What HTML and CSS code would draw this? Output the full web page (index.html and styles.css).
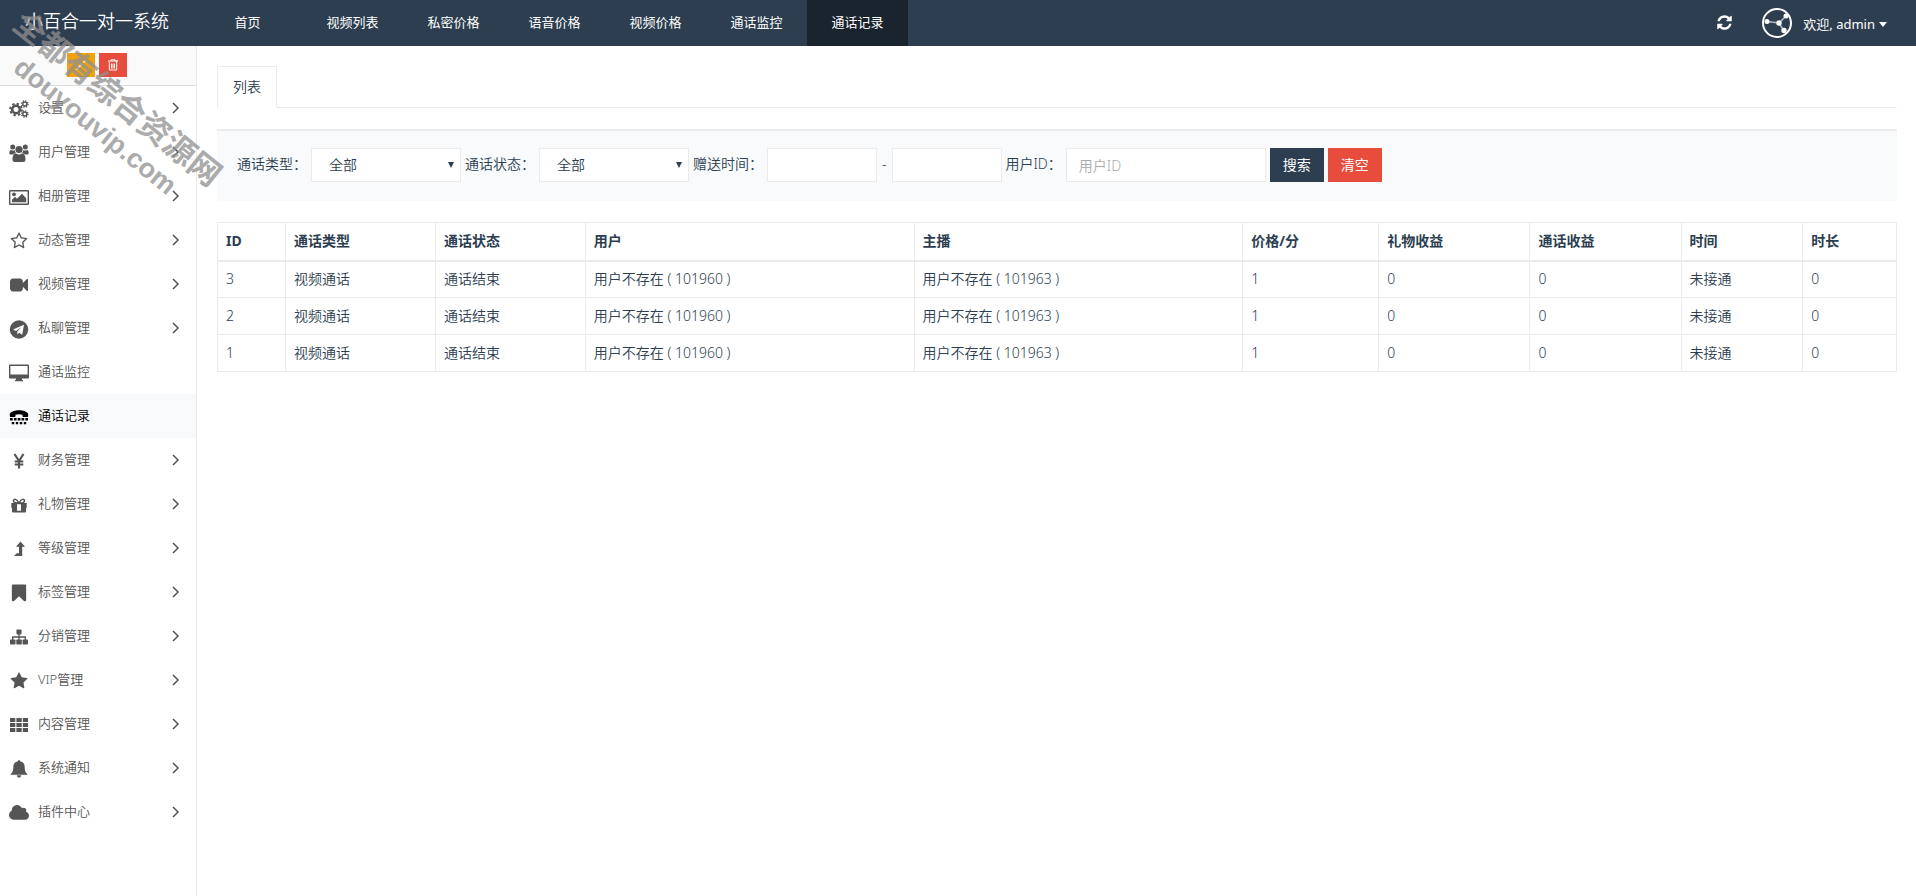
FILE: index.html
```html
<!DOCTYPE html>
<html lang="zh-CN">
<head>
<meta charset="utf-8">
<title>小百合一对一系统</title>
<link rel="stylesheet" href="styles.css">
</head>
<body>
<svg class="sprite" aria-hidden="true">
  <symbol id="chevron" viewBox="0 0 8 12"><path d="M1 1l5 5-5 5" fill="none" stroke="currentColor" stroke-width="1.5"/></symbol>
  <symbol id="caret" viewBox="0 0 8 6"><path d="M0 0h8L4 5z"/></symbol>
</svg>
<header class="topbar">
  <a class="brand" href="#">小百合一对一系统</a>
  <nav class="topnav">
    <a class="home" href="#">首页</a>
    <a href="#">视频列表</a>
    <a href="#">私密价格</a>
    <a href="#">语音价格</a>
    <a href="#">视频价格</a>
    <a href="#">通话监控</a>
    <a class="active" href="#">通话记录</a>
  </nav>
  <div class="userbar">
    <button class="refresh" type="button" aria-label="刷新"><svg viewBox="0 0 1792 1792" width="17" height="17"><path d="M1639 1056q0 5-1 7-64 268-268 434.500t-478 166.500q-146 0-282.500-55t-243.500-157l-129 129q-19 19-45 19t-45-19-19-45v-448q0-26 19-45t45-19h448q26 0 45 19t19 45-19 45l-137 137q71 66 161 102t187 36q134 0 250-65t186-179q11-17 53-117 8-23 30-23h192q13 0 22.500 9.500t9.500 22.500zm25-800v448q0 26-19 45t-45 19h-448q-26 0-45-19t-19-45 19-45l138-138q-148-137-349-137-134 0-250 65t-186 179q-11 17-53 117-8 23-30 23h-199q-13 0-22.500-9.500t-9.500-22.500v-7q65-268 270-434.500t480-166.500q146 0 284 55.500t245 156.500l130-129q19-19 45-19t45 19 19 45z"/></svg></button>
    <button class="user" type="button">
      <svg viewBox="0 0 30 30" width="30" height="30"><circle cx="15" cy="15" r="14" fill="none" stroke="#fff" stroke-width="2"/><path d="M5 13.500L17 15l7-7M17 15l5 8" fill="none" stroke="#b4bac6" stroke-width="1.5"/><g><circle cx="5" cy="13.500" r="2.500"/><circle cx="17" cy="15" r="2.700"/><circle cx="24" cy="8" r="2.500"/><circle cx="22" cy="22.500" r="2.700"/></g></svg>
      <span class="hello">欢迎, admin</span>
      <svg class="user-caret" width="8" height="6"><use href="#caret"/></svg>
    </button>
  </div>
</header>
<div class="body">
  <aside class="sidebar">
    <div class="shortcuts">
      <button class="sc warn" type="button" aria-label="清理"><svg viewBox="0 0 12 12" width="12" height="12"><path d="M1 10l6-6 1 1-6 6zM8 3l2-2 1 1-2 2z"/></svg></button>
      <button class="sc danger" type="button" aria-label="删除"><svg viewBox="0 0 12 12" width="12" height="12"><path d="M4 2V.8h4V2h3M1 2h10M2.300 3v8h7.400V3M4.500 4.500v5M6 4.500v5M7.500 4.500v5" fill="none" stroke="#fff" stroke-width="1"/></svg></button>
    </div>
    <nav class="menu">
      <a href="#"><svg class="ic" viewBox="0 0 20 20"><g fill="none" stroke="currentColor"><circle cx="7" cy="10.500" r="3.800" stroke-width="2.600"/><circle cx="7" cy="10.500" r="5.800" stroke-width="2" stroke-dasharray="2.300 2.255"/><circle cx="15.800" cy="5" r="2" stroke-width="1.400"/><circle cx="15.800" cy="5" r="3.200" stroke-width="1.300" stroke-dasharray="1.300 1.213"/><circle cx="15.800" cy="15" r="2" stroke-width="1.400"/><circle cx="15.800" cy="15" r="3.200" stroke-width="1.300" stroke-dasharray="1.300 1.213"/></g></svg><span>设置</span><svg class="ar"><use href="#chevron"/></svg></a>
      <a href="#"><svg class="ic" viewBox="0 0 20 20"><circle cx="3.700" cy="4" r="2.500"/><circle cx="16.300" cy="4" r="2.500"/><circle cx="10" cy="6.500" r="3.600"/><path d="M.3 10.500Q.3 6.800 2 7q2 1.200 3.600 0Q6 9.500 7 10q-2 .2-3 1.500H1.500Q.3 11.500.3 10.500zM19.700 10.500q0-3.700-1.700-3.500-2 1.200-3.600 0-.4 2.500-1.400 3 2 .2 3 1.500h2.500q1.200 0 1.200-1zM3.500 16.500c0-3.500.8-6 3.500-6q3 2 6 0c2.700 0 3.500 2.500 3.500 6q0 2.500-2.500 2.500H6q-2.500 0-2.500-2.500z"/></svg><span>用户管理</span><svg class="ar"><use href="#chevron"/></svg></a>
      <a href="#"><svg class="ic" viewBox="0 0 20 20"><path fill-rule="evenodd" d="M1 3h18q1 0 1 1v13q0 1-1 1H1q-1 0-1-1V4q0-1 1-1zm.4 1.400v12.200h17.200V4.400z"/><circle cx="5" cy="7.300" r="1.900"/><path d="M3 15.200v-2.400l3-3 2 2L13 6.800l4.200 4.400v4z"/></svg><span>相册管理</span><svg class="ar"><use href="#chevron"/></svg></a>
      <a href="#"><svg class="ic star" viewBox="0 0 1792 1792"><path d="M1201 1004l306-297-422-62-189-382-189 382-422 62 306 297-73 421 378-199 377 199zm527-357q0 22-26 48l-363 354 86 500q1 7 1 20 0 50-41 50-19 0-40-12l-449-236-449 236q-22 12-40 12-21 0-31.500-14.500t-10.500-35.500q0-6 2-20l86-500-364-354q-25-27-25-48 0-37 56-46l502-73 225-455q19-41 49-41t49 41l225 455 502 73q56 9 56 46z"/></svg><span>动态管理</span><svg class="ar"><use href="#chevron"/></svg></a>
      <a href="#"><svg class="ic cam" viewBox="0 0 1792 1792"><path d="M1792 352v1088q0 42-39 59-13 5-25 5-27 0-45-19l-403-403v166q0 119-84.500 203.500t-203.500 84.500h-704q-119 0-203.500-84.500t-84.500-203.500v-704q0-119 84.500-203.500t203.500-84.500h704q119 0 203.500 84.500t84.500 203.500v165l403-402q18-19 45-19 12 0 25 5 39 17 39 59z"/></svg><span>视频管理</span><svg class="ar"><use href="#chevron"/></svg></a>
      <a href="#"><svg class="ic" viewBox="0 0 20 20"><circle cx="10" cy="10.500" r="9.200"/><path fill="#fff" d="M15 5.700L4 10.600l3 1.300 5.500-4L8.300 12.600v3l1.900-1.800 3 2z"/></svg><span>私聊管理</span><svg class="ar"><use href="#chevron"/></svg></a>
      <a href="#"><svg class="ic" viewBox="0 0 20 20"><path fill-rule="evenodd" d="M1 1.500h18q1 0 1 1v12q0 1-1 1h-6v1.300l1 .5v.9H6v-.9l1-.5v-1.300H1q-1 0-1-1v-12q0-1 1-1zm.4 1.400v8.600h17.200V2.900z"/></svg><span>通话监控</span></a>
      <a class="current" href="#"><svg class="ic" viewBox="0 0 20 20"><path d="M.8 9V7C3 2 17 2 19.200 7v2q0 .9-.9.900h-3.900q-.9 0-.9-.9V7.800q-3.500-1.300-7 0V9q0 .9-.9.900H1.700Q.8 9.900.8 9z"/><path d="M1 11h2.700v2.400H1zm3.900 0h2.700v2.400H4.900zm3.800 0h2.700v2.400H8.700zm3.800 0h2.700v2.400h-2.700zm3.800 0H19v2.400h-2.700zM2.800 15h2.400v2.200H2.800zm4 0h2.400v2.200H6.800zm4 0h2.400v2.200h-2.400zm4 0h2.400v2.200h-2.400z"/></svg><span>通话记录</span></a>
      <a href="#"><svg class="ic" viewBox="0 0 20 20"><path d="M5.500 3l4.500 7 4.500-7M10 10v7.500M5.700 10.500h8.600M5.700 13.500h8.600" fill="none" stroke="currentColor" stroke-width="2.200"/></svg><span>财务管理</span><svg class="ar"><use href="#chevron"/></svg></a>
      <a href="#"><svg class="ic" viewBox="0 0 20 20"><path d="M2.300 8H8v9.500H4q-1 0-1-1v-3.700h-.7zM17.700 8H12v9.500h4q1 0 1-1v-3.700h.7zM8 8h4v1.200H8zm0 7.800h4v1.700H8z"/><path d="M9.800 8C8 3.500 4.500 3.500 4.500 6q0 2 5 2M10.200 8c1.800-4.500 5.300-4.500 5.300-2q0 2-5 2" fill="none" stroke="currentColor" stroke-width="1.500"/></svg><span>礼物管理</span><svg class="ar"><use href="#chevron"/></svg></a>
      <a href="#"><svg class="ic" viewBox="0 0 20 20"><path d="M11.500 2.500l4.500 5.200h-2.800v9.300H5l2.800-2.800h2.200V7.700H7z"/></svg><span>等级管理</span><svg class="ar"><use href="#chevron"/></svg></a>
      <a href="#"><svg class="ic" viewBox="0 0 1792 1792"><path d="M1420 128q23 0 44 9 33 13 52.500 41t19.500 62v1289q0 34-19.500 62t-52.500 41q-19 8-44 8-48 0-83-32l-441-424-441 424q-36 33-83 33-23 0-44-9-33-13-52.500-41t-19.500-62v-1289q0-34 19.500-62t52.500-41q21-9 44-9h1048z"/></svg><span>标签管理</span><svg class="ar"><use href="#chevron"/></svg></a>
      <a href="#"><svg class="ic" viewBox="0 0 20 20"><rect x="7.500" y="2.500" width="5" height="5" rx=".7"/><rect x="1" y="12.500" width="5.500" height="5" rx=".7"/><rect x="7.300" y="12.500" width="5.500" height="5" rx=".7"/><rect x="13.500" y="12.500" width="5.500" height="5" rx=".7"/><path d="M10 7v6M3.700 13v-3h12.600v3" fill="none" stroke="currentColor" stroke-width="1.300"/></svg><span>分销管理</span><svg class="ar"><use href="#chevron"/></svg></a>
      <a href="#"><svg class="ic star" viewBox="0 0 1792 1792"><path d="M1728 647q0 22-26 48l-363 354 86 500q1 7 1 20 0 21-10.500 35.500t-30.500 14.500q-19 0-40-12l-449-236-449 236q-22 12-40 12-21 0-31.500-14.500t-10.500-35.500q0-6 2-20l86-500-364-354q-25-27-25-48 0-37 56-46l502-73 225-455q19-41 49-41t49 41l225 455 502 73q56 9 56 46z"/></svg><span>VIP管理</span><svg class="ar"><use href="#chevron"/></svg></a>
      <a href="#"><svg class="ic" viewBox="0 0 20 20"><path d="M1 3h5.300v4H1zm6.400 0h5.300v4H7.400zm6.400 0H19v4h-5.200zM1 8h5.300v4H1zm6.400 0h5.300v4H7.400zm6.400 0H19v4h-5.200zM1 13h5.300v4H1zm6.400 0h5.300v4H7.400zm6.400 0H19v4h-5.200z"/></svg><span>内容管理</span><svg class="ar"><use href="#chevron"/></svg></a>
      <a href="#"><svg class="ic" viewBox="0 0 20 20"><path d="M10 1q1 0 1 1.200c3.400.6 4.700 3 4.700 6 0 3.300.8 5.500 2.700 6.800v.8H1.600V15c1.900-1.300 2.700-3.500 2.700-6.800 0-3 1.300-5.400 4.700-6Q9 1 10 1zM7.700 16.300h4.600q-.3 2.400-2.300 2.400t-2.300-2.400z"/></svg><span>系统通知</span><svg class="ar"><use href="#chevron"/></svg></a>
      <a href="#"><svg class="ic" viewBox="64 0 1920 1792"><path d="M1984 1152q0 159-112.500 271.500t-271.500 112.500h-1088q-185 0-316.500-131.500t-131.500-316.500q0-132 71-241.500t187-163.500q-2-28-2-43 0-212 150-362t362-150q158 0 286.500 88t187.500 230q70-62 166-62 106 0 181 75t75 181q0 75-41 138 129 30 213 134.500t84 239.500z"/></svg><span>插件中心</span><svg class="ar"><use href="#chevron"/></svg></a>
    </nav>
  </aside>
  <main class="content">
    <div class="tabs"><a class="tab" href="#">列表</a></div>
    <form class="filter">
      <label for="type">通话类型：</label>
      <span class="pick"><select id="type"><option>全部</option></select><svg viewBox="0 0 6 6"><path d="M0 0h6L3 6z"/></svg></span>
      <label for="state">通话状态：</label>
      <span class="pick"><select id="state"><option>全部</option></select><svg viewBox="0 0 6 6"><path d="M0 0h6L3 6z"/></svg></span>
      <label for="from">赠送时间：</label>
      <input class="date" id="from" type="text">
      <span class="dash">-</span>
      <input class="date" id="to" type="text" aria-label="结束时间">
      <label for="uid">用户ID：</label>
      <input class="uid" id="uid" type="text" placeholder="用户ID">
      <button class="btn" type="button">搜索</button>
      <button class="btn danger" type="button">清空</button>
    </form>
    <table class="records">
      <colgroup><col class="c-id"><col class="c-kind"><col class="c-kind"><col class="c-user"><col class="c-user"><col class="c-price"><col class="c-gain"><col class="c-gain"><col class="c-time"><col></colgroup>
      <thead><tr><th>ID</th><th>通话类型</th><th>通话状态</th><th>用户</th><th>主播</th><th>价格/分</th><th>礼物收益</th><th>通话收益</th><th>时间</th><th>时长</th></tr></thead>
      <tbody>
        <tr><td>3</td><td>视频通话</td><td>通话结束</td><td>用户不存在 ( 101960 )</td><td>用户不存在 ( 101963 )</td><td>1</td><td>0</td><td>0</td><td>未接通</td><td>0</td></tr>
        <tr><td>2</td><td>视频通话</td><td>通话结束</td><td>用户不存在 ( 101960 )</td><td>用户不存在 ( 101963 )</td><td>1</td><td>0</td><td>0</td><td>未接通</td><td>0</td></tr>
        <tr><td>1</td><td>视频通话</td><td>通话结束</td><td>用户不存在 ( 101960 )</td><td>用户不存在 ( 101963 )</td><td>1</td><td>0</td><td>0</td><td>未接通</td><td>0</td></tr>
      </tbody>
    </table>
  </main>
</div>
<div class="watermark"><div class="wm-name">全都有综合资源网</div><div class="wm-site">douyouvip.com</div></div>
</body>
</html>
```
FILE: styles.css
```css
* { box-sizing: border-box; }

body {
  margin: 0;
  min-height: 100vh;
  display: flex;
  flex-direction: column;
  background: #fff;
  color: #2c3e50;
  font: 350 14px/20px "Noto Sans", "Noto Sans CJK SC", sans-serif;
}

a { color: inherit; text-decoration: none; }
button, input, select { font: inherit; border-radius: 0; }
svg { display: block; fill: currentColor; }
.sprite { position: absolute; width: 0; height: 0; }

.topbar {
  display: flex;
  height: 46px;
  background: #2c3e50;
  color: #fff;
  font-size: 13px;
  font-weight: 400;
}
.brand {
  width: 211px;
  padding-left: 25px;
  font-size: 18px;
  font-weight: 350;
  line-height: 42px;
}
.topnav { display: flex; line-height: 44px; }
.topnav a { width: 101px; text-align: center; }
.topnav .home { width: 91px; padding-right: 18px; }
.topnav .active { background: #1a242f; }
.userbar {
  display: flex;
  align-items: center;
  gap: 29px;
  margin-left: auto;
  padding-right: 29px;
}
.refresh, .user {
  padding: 0;
  border: 0;
  background: none;
  color: #fff;
}
.refresh { margin-bottom: 2px; }
.user { display: flex; align-items: center; }
.hello { margin: 0 4px 0 11px; padding-top: 2px; }
.user-caret { margin-top: 3px; }

.body { display: flex; flex: 1; }
.sidebar {
  width: 197px;
  flex: none;
  border-right: 1px solid #e8e8e8;
  font-size: 13px;
}
.shortcuts {
  display: flex;
  justify-content: center;
  gap: 4px;
  height: 40px;
  padding: 7px 2px 0 0;
  background: #fafafa;
  border-bottom: 1px solid #ddd;
}
.sc {
  display: grid;
  place-items: center;
  width: 28px;
  height: 24px;
  padding: 0;
  border: 0;
  color: #fff;
}
.warn { background: #f0a30e; }
.danger { background: #e74c3c; }
.menu a {
  display: flex;
  align-items: center;
  height: 44px;
  padding: 0 16px 0 9px;
  color: #555;
}
.menu span { flex: 1; padding: 0 0 2px 9px; }
.menu .current { background: #f8f9fb; color: #000; }
.ic { width: 20px; height: 20px; margin-top: 2px; }
.star, .cam { padding: 1px; }
.ar { width: 8px; height: 12px; }

.content { flex: 1; padding: 20px 19px 20px 20px; }
.tabs { display: flex; border-bottom: 1px solid #ebebeb; }
.tab {
  padding: 10px 15px;
  margin-bottom: -1px;
  border: 1px solid #ebebeb;
  border-bottom-color: #fff;
}
.filter {
  display: flex;
  align-items: flex-start;
  gap: 4px;
  height: 72px;
  margin: 21px 0;
  padding: 17px 20px;
  border-top: 2px solid #ebecee;
  background: #f8fafc;
  line-height: 32px;
}
.filter input, .filter select {
  height: 34px;
  border: 1px solid #ebebeb;
  background: #fff;
  color: #2c3e50;
}
.filter input { padding: 0 12px; }
.filter input::placeholder { color: #aaa; }
.filter .date { width: 110px; }
.filter .uid { width: 200px; }
.dash { padding: 0 1px; }
.pick { position: relative; }
.pick select {
  appearance: none;
  display: block;
  width: 150px;
  padding: 0 17px;
}
.pick svg {
  position: absolute;
  top: 14px;
  right: 7px;
  width: 6px;
  height: 6px;
  pointer-events: none;
}
.btn {
  height: 34px;
  padding: 0 13px;
  border: 0;
  background: #2c3e50;
  color: #fff;
  font-weight: 400;
}
.btn.danger { background: #e74c3c; }

.records {
  width: 100%;
  table-layout: fixed;
  border-collapse: collapse;
}
.records th, .records td {
  height: 37px;
  padding: 0 8px;
  border: 1px solid #ebebeb;
  text-align: left;
}
.records th { height: 38px; border-bottom-width: 2px; }
.c-id { width: 4.05%; }
.c-kind { width: 8.93%; }
.c-user { width: 19.58%; }
.c-price { width: 8.1%; }
.c-gain { width: 9%; }
.c-time { width: 7.25%; }

.watermark {
  position: absolute;
  left: -25px;
  top: 78px;
  width: 262px;
  color: #909090;
  opacity: .75;
  font-family: "Liberation Sans", "Noto Sans CJK SC", sans-serif;
  font-weight: bold;
  line-height: 35px;
  text-align: center;
  white-space: nowrap;
  transform: rotate(39deg);
  pointer-events: none;
}
.wm-name { font-size: 32px; }
.wm-site { font-size: 27px; }
```
